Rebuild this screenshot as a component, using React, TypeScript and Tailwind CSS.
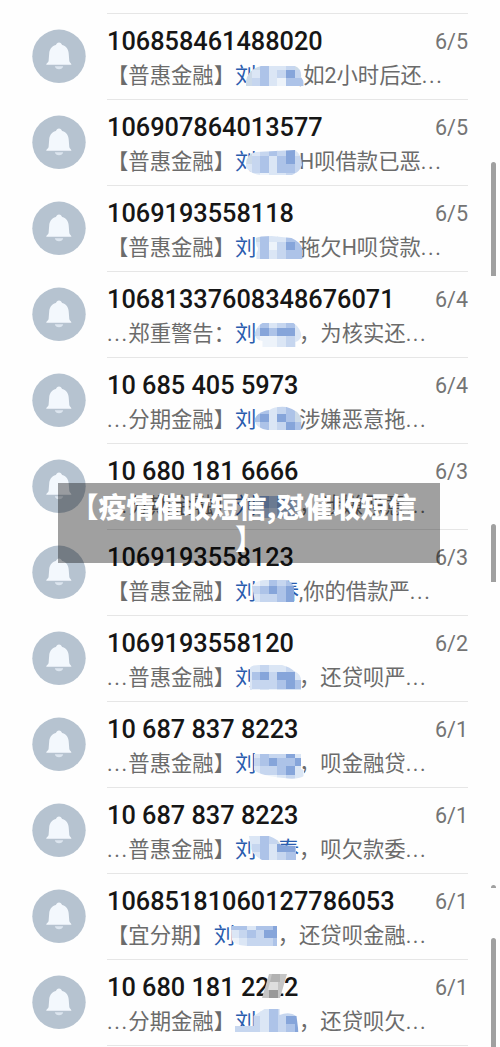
import React from "react";

type Mosaic = { x: number; y: number; shape: string; rows: string[] };
type Message = {
  number: string;
  date: string;
  lead: string;
  tail: string;
  third?: string;
  mosaic: Mosaic;
};

const shades: Record<string, string> = {
  a: "#edf3fa",
  b: "#dbe6f5",
  c: "#c6d6ef",
  d: "#adc3e8",
  e: "#86a5da",
  f: "#ccdae8",
  g: "#a9c1e6",
};

const messages: Message[] = [
  {
    number: "106858461488020", date: "6/5", lead: "【普惠金融】", tail: ",如2小时后还",
    mosaic: { x: 243, y: 47, shape: "M3 25V20Q5 8 18 5H52Q59 8 58 16L61 21V25Z", rows: ["ffdbbcfa", "fbdbcecb", "fcdbaddb"] },
  },
  {
    number: "106907864013577", date: "6/5", lead: "【普惠金融】", tail: "H呗借款已恶",
    mosaic: { x: 243, y: 47, shape: "M3 20Q2 7 13 5L52 3Q59 8 59 18Q57 25 49 28H18Q7 27 3 20Z", rows: ["fbcdceba", "fcdbdecf", "bcdbddcf", "bbabbcab"] },
  },
  {
    number: "1069193558118", date: "6/5", lead: "【普惠金融】", tail: "拖欠H呗贷款",
    mosaic: { x: 251.5, y: 47, shape: "M4 5Q8 3 20 3L40 5Q49 9 51 16V26H5V20Q8 15 5 13Z", rows: ["fdbbddb", "bdacedc", "bdbcddb"] },
  },
  {
    number: "10681337608348676071", date: "6/4", lead: "…郑重警告：", tail: "，为核实还",
    mosaic: { x: 251.5, y: 47, shape: "M3 15Q5 7 11 4H42Q49 9 50 17Q48 22 44 23V28H11V22Q4 21 3 15Z", rows: ["bdbcdbb", "cedeeba", "baabcba"] },
  },
  {
    number: "10 685 405 5973", date: "6/4", lead: "…分期金融】", tail: "涉嫌恶意拖",
    mosaic: { x: 251.5, y: 47, shape: "M3 16Q4 7 18 5Q24 1 35 2Q47 5 50 14V25H16Q6 24 3 16Z", rows: ["fdbcdfb", "gebedfb", "bdbcedf"] },
  },
  {
    number: "10 680 181 6666", date: "6/3", lead: "…分期金融】", tail: "，涉嫌恶意",
    mosaic: { x: 251.5, y: 47, shape: "M4 5H46V27H8Q4 22 4 17Z", rows: ["gedecba", "cegedcb", "bdcddba"] },
  },
  {
    number: "1069193558123", date: "6/3", lead: "【普惠金融】", tail: ",你的借款严", third: "春",
    mosaic: { x: 243, y: 47, shape: "M9 9Q14 2 26 3H43Q49 5 51 10V25H12Z", rows: ["babdcddb", "bcdedeea", "bbccdeea"] },
  },
  {
    number: "1069193558120", date: "6/2", lead: "…普惠金融】", tail: "，还贷呗严",
    mosaic: { x: 243, y: 47, shape: "M7 5Q8 2 16 2H39Q47 4 51 8Q59 11 58 20V27H7Z", rows: ["bbcbbcba", "bdeceeba", "bcccdeda", "bababbba"] },
  },
  {
    number: "10 687 837 8223", date: "6/1", lead: "…普惠金融】", tail: "，呗金融贷",
    mosaic: { x: 243, y: 47, shape: "M11 5H58V20L61 21V27Q54 31 41 29Q18 27 11 21Z", rows: ["bbdcceba", "bcdeddea", "bbccdeba", "aaaabcba"] },
  },
  {
    number: "10 687 837 8223", date: "6/1", lead: "…普惠金融】", tail: "，呗欠款委", third: "春",
    mosaic: { x: 243, y: 47, shape: "M6 1H26Q35 4 38 10L53 11V25H19Q10 20 8 14Z", rows: ["bbdcfcda", "bcdbeedb", "bbdbcddb"] },
  },
  {
    number: "10685181060127786053", date: "6/1", lead: "【宜分期】", tail: "，还贷呗金融",
    mosaic: { x: 230, y: 47, shape: "M1 5H47V25H17Q3 24 2 19Z", rows: ["ddbdde", "bcdcee", "abcccd"] },
  },
  {
    number: "10 680 181 2222", date: "6/1", lead: "…分期金融】", tail: "，还贷呗欠",
    mosaic: { x: 234.5, y: 47, shape: "M0 19H19V9L30 2H45V8Q55 4 62 9L64 25H0Z", rows: ["abbbdccb", "bbcbdcee", "cccbdcde"] },
  },
];

function Bell() {
  return (
    <svg className="h-[54px] w-[54px] shrink-0" viewBox="0 0 54 54">
      <circle cx="27" cy="27.3" r="26.7" fill="#b6c3d0" />
      <path
        d="M27 13.4C28.5 13.4 29.6 14.6 30.2 16.1C34.7 17.4 36.4 20.7 36.7 24.5L37.3 32C37.5 33.3 39.1 34.1 39.3 35.2V35.8H14.3V35.2C14.5 34.1 16.4 33.3 16.6 32L17.2 24.5C17.5 20.7 19.4 17.4 23.8 16.1C24.4 14.6 25.5 13.4 27 13.4Z"
        fill="#f3f8fd"
      />
      <path d="M22.8 37.2H31.2C30.8 39.1 29.1 40.2 27 40.2S23.2 39.1 22.8 37.2Z" fill="#dce5ef" />
    </svg>
  );
}

function Blur({ mosaic, id }: { mosaic: Mosaic; id: string }) {
  return (
    <svg className="absolute top-0 left-0 h-[86px] w-[361px]" viewBox="107 0 361 86">
      <g transform={`translate(${mosaic.x} ${mosaic.y})`}>
        <clipPath id={id}>
          <path d={mosaic.shape} />
        </clipPath>
        <g clipPath={`url(#${id})`} shapeRendering="crispEdges">
          {mosaic.rows.map((row, j) =>
            row.split("").map((c, i) => (
              <rect
                key={`${i}-${j}`}
                x={i * 8.6}
                y={j * 8.5}
                width="8.8"
                height={j === mosaic.rows.length - 1 ? 14 : 8.7}
                fill={shades[c]}
              />
            )),
          )}
        </g>
      </g>
    </svg>
  );
}

function Dots() {
  return <span className="inline-block w-[21.33px] tracking-[1.6px]">...</span>;
}

function Row({ message, index }: { message: Message; index: number }) {
  const startsWithDots = message.lead.startsWith("…");
  const last = index === messages.length - 1;
  return (
    <li className="flex h-[86px] items-center pl-[31.5px]">
      <Bell />
      <div className="relative ml-[21.5px] h-[86px] w-[361px] border-t border-[#e6e6e6] whitespace-nowrap">
        <div className="mt-[13px] flex h-[30px] items-center justify-between">
          <span className="text-[25.3px] leading-[30px] font-medium text-[#161616]">{message.number}</span>
          <span className="text-[21.5px] leading-[30px] text-[#747474]">{message.date}</span>
        </div>
        <div className="mt-[4px] flex h-[30px] items-center text-[21.33px] leading-[30px] text-[#6b6b6b]">
          {startsWithDots && <Dots />}
          <span>{startsWithDots ? message.lead.slice(1) : message.lead}</span>
          <span className="flex w-[64px] justify-between text-[#2a5cae]">
            <span>刘</span>
            <span>{message.third}</span>
          </span>
          <span>{message.tail}</span>
          <Dots />
        </div>
        <Blur mosaic={message.mosaic} id={`blur-${index}`} />
        {last && (
          <svg className="absolute top-[13px] left-[155px] h-[26px] w-[26px]" viewBox="0 0 26 26">
            <path d="M7 1H25L18 25H0Z" fill="#c5c5c5" />
            <path d="M10 1H18V9H8Z" fill="#b2b2b2" />
            <path d="M8 9H16V17H6Z" fill="#dedede" />
            <path d="M7 17H16V25H7Z" fill="#999" />
          </svg>
        )}
      </div>
    </li>
  );
}

export default function App() {
  return (
    <main className="relative flex h-[1047px] w-[500px] overflow-hidden bg-[#fefefe] font-[Roboto,'Noto_Sans_CJK_SC',sans-serif]">
      <ul className="w-[468px] shrink-0 pt-[13px]">
        {messages.map((message, i) => (
          <Row key={i} message={message} index={i} />
        ))}
        <li className="ml-[107px] h-px bg-[#e6e6e6]" />
      </ul>
      <div className="ml-[22.5px] flex w-[5px] flex-col pt-[162px]">
        <div className="h-[114px] rounded-t-full bg-[#a0a0a0]" />
        <div className="mt-[248px] h-[58px] rounded-t-full bg-[#a0a0a0]" />
        <div className="mt-[303px] h-[3px] rounded-t-full bg-[#a0a0a0]" />
        <div className="mt-[50px] h-[109px] rounded-t-full bg-[#a0a0a0]" />
      </div>
      <div className="absolute top-[483px] left-[58px] h-[80px] w-[382px] bg-black/37 pt-[7px] text-center font-['Noto_Sans_CJK_SC',sans-serif] text-[28px] leading-[32px] font-black text-white">
        <div className="-ml-[11px]">【疫情催收短信,怼催收短信</div>
        <div>】</div>
      </div>
    </main>
  );
}
